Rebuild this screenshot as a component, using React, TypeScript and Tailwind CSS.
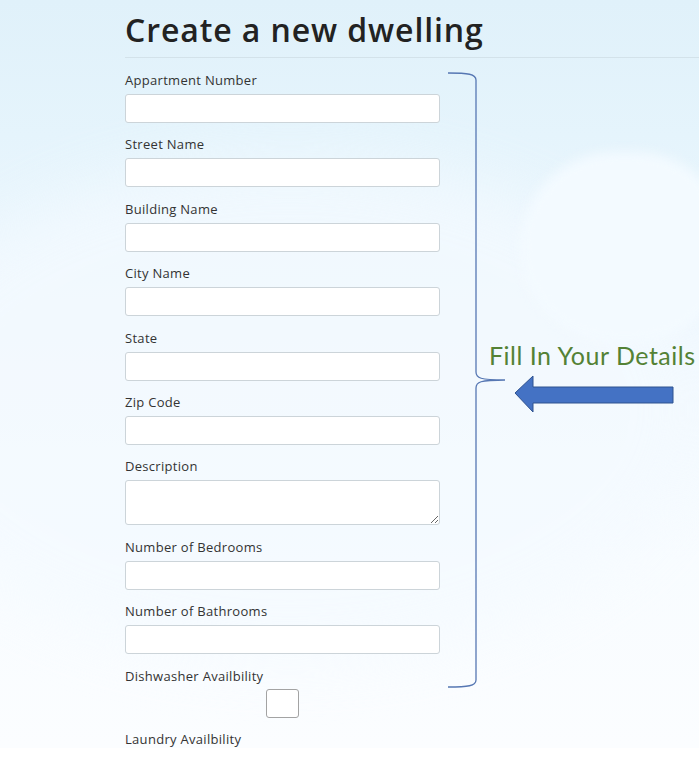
import React from "react";

const fields = [
  "Appartment Number",
  "Street Name",
  "Building Name",
  "City Name",
  "State",
  "Zip Code",
];

const numberFields = ["Number of Bedrooms", "Number of Bathrooms"];

function Field({ label }: { label: string }) {
  return (
    <div className="flex flex-col">
      <label className="text-[13px] leading-[20px] tracking-[0.3px] text-[#333]">{label}</label>
      <input
        type="text"
        className="mt-[4px] h-[29px] w-full rounded-[3px] border border-[#ccd4d9] bg-white px-2 outline-none"
      />
    </div>
  );
}

export default function App() {
  return (
    <div className="h-[772px] w-[699px] bg-white font-['Open_Sans',sans-serif]">
      <div className="relative h-[748px] w-full overflow-hidden bg-[linear-gradient(180deg,#e0f1fa_0%,#e5f4fc_18%,#f0f8fe_45%,#f8fcff_75%,#fbfdff_100%)]">
        {/* soft background shapes */}
        <div className="pointer-events-none absolute left-[-120px] top-[160px] h-[500px] w-[820px] rounded-[50%] bg-[#f4faff] opacity-70 blur-[30px]" />
        <div className="pointer-events-none absolute left-[520px] top-[152px] h-[190px] w-[210px] rounded-full bg-[#f3faff] blur-[6px]" />

        {/* bracket + note */}
        <svg className="pointer-events-none absolute left-0 top-0" width="699" height="748">
          <path
            d="M448 73 C468 73 476 74 476 80 L476 372 C476 378 480 380 505 380 C480 380 476 382 476 388 L476 680 C476 686 468 687 448 687"
            fill="none"
            stroke="#5677b3"
            strokeWidth="1.3"
          />
          <polygon
            points="515,393 533,376 533,387 673,387 673,403 533,403 533,412"
            fill="#4472c4"
            stroke="#2f528f"
            strokeWidth="1"
          />
        </svg>
        <div className="absolute left-[489px] top-[340px] font-['Lato',sans-serif] text-[25px] leading-[30px] tracking-[0.5px] text-[#548235]">
          Fill In Your Details
        </div>

        <div className="relative pl-[125px]">
          <h1 className="pt-[9px] text-[32px] font-semibold leading-[42px] tracking-[0.9px] text-[#222]">
            Create a new dwelling
          </h1>
          <div className="mt-[6px] h-px bg-[#d3e2ea]" />

          <form className="mt-[12px] flex w-[315px] flex-col gap-[11.4px]">
            {fields.map((f) => (
              <Field key={f} label={f} />
            ))}
            <div className="flex flex-col">
              <label className="text-[13px] leading-[20px] tracking-[0.3px] text-[#333]">Description</label>
              <textarea className="mt-[4px] h-[45px] w-full rounded-[3px] border border-[#ccd4d9] bg-white px-2 outline-none" />
            </div>
            {numberFields.map((f) => (
              <Field key={f} label={f} />
            ))}
            <div className="flex flex-col">
              <label className="text-[13px] leading-[20px] tracking-[0.3px] text-[#333]">Dishwasher Availbility</label>
              <div className="mt-[3px] flex justify-center">
                <div className="h-[29px] w-[33px] rounded-[3px] border border-[#a3a3a3] bg-white" />
              </div>
            </div>
            <div className="flex flex-col">
              <label className="text-[13px] leading-[20px] tracking-[0.3px] text-[#333]">Laundry Availbility</label>
            </div>
          </form>
        </div>
      </div>
    </div>
  );
}
